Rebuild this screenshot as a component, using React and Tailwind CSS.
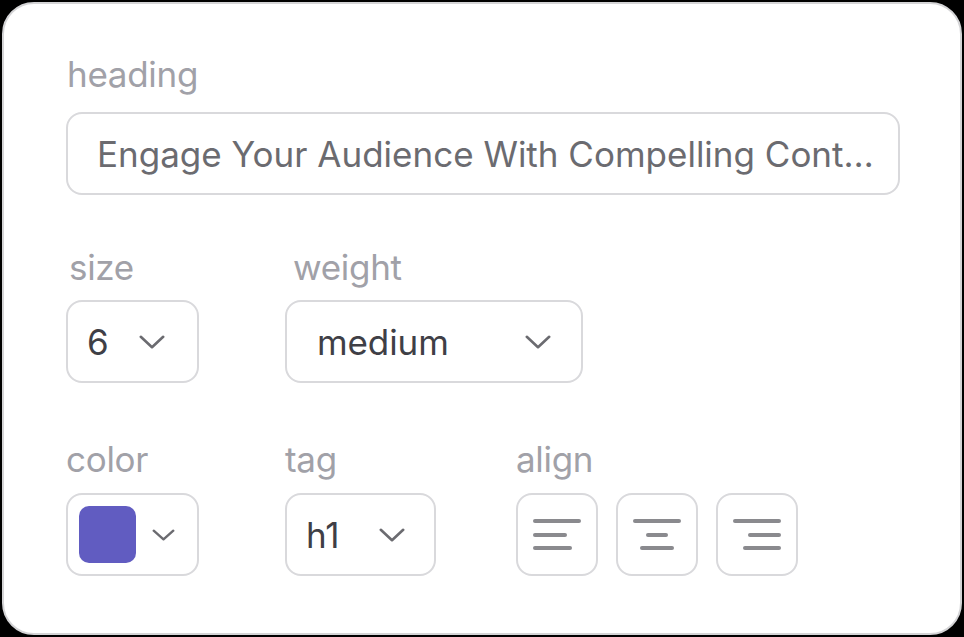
import React from "react";

function Chevron({ w = 26, h = 14, sw = 2.6 }) {
  return (
    <svg width={w} height={h} viewBox={`0 0 ${w} ${h}`} fill="none">
      <polyline
        points={`${sw / 2 + 0.5},${sw / 2 + 0.5} ${w / 2},${h - sw / 2 - 0.5} ${w - sw / 2 - 0.5},${sw / 2 + 0.5}`}
        stroke="#6b6b70"
        strokeWidth={sw}
        strokeLinecap="round"
        strokeLinejoin="round"
      />
    </svg>
  );
}

function AlignIcon({ mode }) {
  const lines =
    mode === "left"
      ? [[2, 46], [2, 32], [2, 37]]
      : mode === "center"
      ? [[2, 46], [15, 33], [9, 39]]
      : [[2, 46], [17, 46], [12, 46]];
  const ys = [3, 17, 30];
  return (
    <svg width="48" height="33" viewBox="0 0 48 33" fill="none">
      {lines.map(([x1, x2], i) => (
        <line
          key={i}
          x1={x1}
          x2={x2}
          y1={ys[i]}
          y2={ys[i]}
          stroke="#8a8a8e"
          strokeWidth="4"
          strokeLinecap="round"
        />
      ))}
    </svg>
  );
}

const box =
  "h-[83px] rounded-[16px] border-2 border-[#d9d9dc] bg-white flex items-center";
const label = "text-[35px] leading-[40px] text-[#a1a1a8] tracking-[-0.3px]";

export default function App() {
  return (
    <div
      className="w-[964px] h-[637px] bg-black p-[2px]"
      style={{ fontFamily: "Inter, 'Noto Sans', sans-serif" }}
    >
      <div className="w-full h-full bg-white rounded-[32px] border-2 border-[#d4d4d6] pt-[50px] pl-[62px] pr-[60px]">
        <div className="flex flex-col">
          <div className={`${label} pl-[1px]`}>heading</div>
          <div className={`${box} mt-[18px] w-[834px] pl-[29px] pr-[20px]`}>
            <span className="text-[35px] leading-[40px] text-[#6b6b70] whitespace-nowrap tracking-[0px]">
              Engage Your Audience With Compelling Cont…
            </span>
          </div>
        </div>

        <div className="flex gap-[86px] mt-[52px]">
          <div className="flex flex-col">
            <div className={`${label} pl-[3px]`}>size</div>
            <div className={`${box} mt-[13px] w-[133px] pl-[19px] pr-[32px] justify-between`}>
              <span className="text-[35px] leading-[40px] text-[#3f3f46]">6</span>
              <Chevron />
            </div>
          </div>
          <div className="flex flex-col">
            <div className={`${label} pl-[8px]`}>weight</div>
            <div className={`${box} mt-[13px] w-[298px] pl-[30px] pr-[30px] justify-between`}>
              <span className="text-[35px] leading-[40px] text-[#3f3f46] tracking-[-0.1px]">medium</span>
              <Chevron />
            </div>
          </div>
        </div>

        <div className="flex mt-[56px]">
          <div className="flex flex-col w-[219px]">
            <div className={label}>color</div>
            <div className={`${box} mt-[14px] w-[133px] pl-[11px] pr-[22px] justify-between`}>
              <div className="w-[57px] h-[57px] rounded-[10px] bg-[#615cc1]" />
              <Chevron w={23} h={12} sw={2.4} />
            </div>
          </div>
          <div className="flex flex-col w-[231px]">
            <div className={label}>tag</div>
            <div className={`${box} mt-[14px] w-[151px] pl-[19px] pr-[29px] justify-between`}>
              <span className="text-[35px] leading-[40px] text-[#3f3f46]">h1</span>
              <Chevron />
            </div>
          </div>
          <div className="flex flex-col">
            <div className={label}>align</div>
            <div className="flex gap-[18px] mt-[14px]">
              {["left", "center", "right"].map((m) => (
                <div key={m} className={`${box} w-[82px] justify-center`}>
                  <AlignIcon mode={m} />
                </div>
              ))}
            </div>
          </div>
        </div>
      </div>
    </div>
  );
}
